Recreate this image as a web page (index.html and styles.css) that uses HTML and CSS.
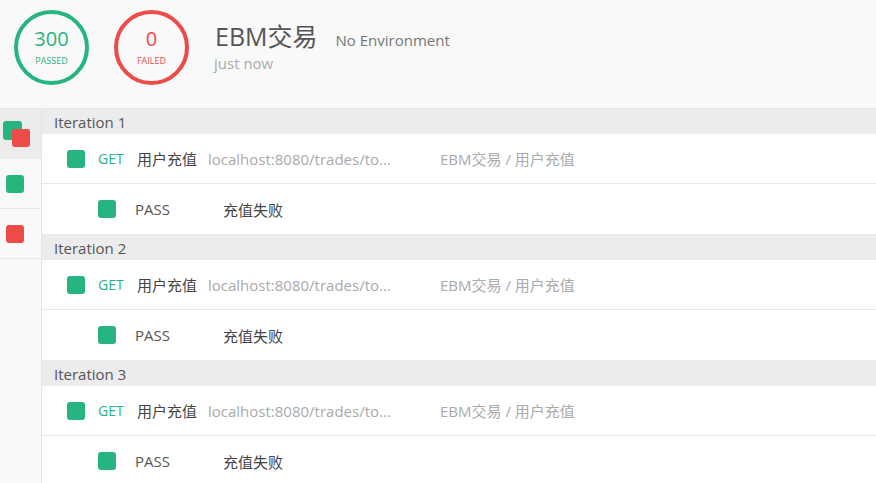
FILE: index.html
```html
<!DOCTYPE html>
<html>
<head>
<meta charset="utf-8">
<link rel="stylesheet" href="styles.css">
</head>
<body>
<div class="header">
  <div class="stat stat-pass"><span class="num">300</span><span class="lbl">PASSED</span></div>
  <div class="stat stat-fail"><span class="num">0</span><span class="lbl">FAILED</span></div>
  <div class="title-block">
    <div class="title-row"><span class="title">EBM交易</span><span class="env">No Environment</span></div>
    <div class="time">just now</div>
  </div>
</div>
<div class="body">
  <div class="sidebar">
    <div class="side-item active"><span class="sq sq-green sq-back"></span><span class="sq sq-red sq-front"></span></div>
    <div class="side-item"><span class="sq sq-green"></span></div>
    <div class="side-item"><span class="sq sq-red"></span></div>
  </div>
  <div class="main">
    <div class="iter">Iteration 1</div>
    <div class="req-row"><span class="sq sq-green"></span><span class="method">GET</span><span class="name">用户充值</span><span class="url">localhost:8080/trades/to...</span><span class="crumb">EBM交易 / 用户充值</span></div>
    <div class="test-row"><span class="sq sq-green"></span><span class="status">PASS</span><span class="tname">充值失败</span></div>
    <div class="iter">Iteration 2</div>
    <div class="req-row"><span class="sq sq-green"></span><span class="method">GET</span><span class="name">用户充值</span><span class="url">localhost:8080/trades/to...</span><span class="crumb">EBM交易 / 用户充值</span></div>
    <div class="test-row"><span class="sq sq-green"></span><span class="status">PASS</span><span class="tname">充值失败</span></div>
    <div class="iter">Iteration 3</div>
    <div class="req-row"><span class="sq sq-green"></span><span class="method">GET</span><span class="name">用户充值</span><span class="url">localhost:8080/trades/to...</span><span class="crumb">EBM交易 / 用户充值</span></div>
    <div class="test-row"><span class="sq sq-green"></span><span class="status">PASS</span><span class="tname">充值失败</span></div>
  </div>
</div>
</body>
</html>
```
FILE: styles.css
```css
* { box-sizing: border-box; }
html, body { margin: 0; padding: 0; }
body {
  font-family: "Open Sans", "Noto Sans CJK SC", sans-serif;
  background: #fff;
  width: 876px;
  height: 483px;
  overflow: hidden;
  color: #444;
}
.header {
  height: 109px;
  background: #f9f9f9;
  border-bottom: 1px solid #e6e6e6;
  display: flex;
  align-items: flex-start;
  padding: 10px 14px;
}
.stat {
  width: 75px;
  height: 75px;
  border-radius: 50%;
  border: 4px solid;
  display: flex;
  flex-direction: column;
  align-items: center;
  justify-content: center;
  margin-right: 25px;
}
.stat-pass { border-color: #26b47f; color: #26b47f; }
.stat-fail { border-color: #ed4b48; color: #ed4b48; margin-right: 26px; }
.num { font-size: 20px; line-height: 24px; margin-top: -2px; }
.lbl { font-size: 9px; line-height: 12px; margin-top: 4px; }
.title-block { padding-top: 11px; }
.title-row { display: flex; align-items: baseline; }
.title { font-size: 25px; color: #555; line-height: 30px; }
.env { font-size: 15px; color: #777; margin-left: 18px; }
.time { font-size: 15px; color: #aaa; line-height: 18px; margin-top: 3px; margin-left: -1px; }
.body { display: flex; }
.sidebar {
  width: 42px;
  background: #f9f9f9;
  border-right: 1px solid #e6e6e6;
  height: 375px;
  flex: none;
}
.side-item {
  height: 50px;
  border-bottom: 1px solid #e6e6e6;
  display: flex;
  align-items: center;
  padding-left: 6px;
  position: relative;
}
.side-item.active { background: #ececec; border-bottom-color: #ececec; }
.sq {
  display: inline-block;
  width: 18px;
  height: 18px;
  border-radius: 3px;
  flex: none;
}
.sq-green { background: #26b47f; }
.sq-red { background: #ed4b48; }
.sq-back { position: absolute; left: 3px; top: 12px; width: 19px; height: 19px; }
.sq-front { position: absolute; left: 12px; top: 20px; }
.main { flex: 1; }
.iter {
  height: 25px;
  line-height: 26px;
  background: #ececec;
  padding-left: 12px;
  font-size: 15px;
  color: #555;
}
.req-row, .test-row {
  height: 50px;
  border-bottom: 1px solid #e8e8e8;
  display: flex;
  align-items: center;
  font-size: 15px;
  white-space: nowrap;
}
.test-row { height: 51px; }
.req-row { padding-left: 25px; }
.req-row .sq { margin-right: 13px; }
.method { width: 39px; color: #26b47f; font-size: 14px; }
.name { width: 71px; color: #444; }
.url { width: 232px; color: #aaa; }
.crumb { color: #aaa; }
.test-row { padding-left: 56px; }
.test-row .sq { margin-right: 19px; }
.status { width: 88px; color: #555; }
.tname { color: #444; }
```
